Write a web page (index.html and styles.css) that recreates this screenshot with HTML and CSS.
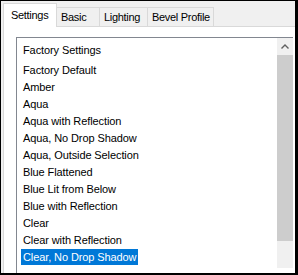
FILE: index.html
```html
<!DOCTYPE html>
<html>
<head>
    <meta charset="UTF-8">
    <title>Settings</title>
    <link rel="stylesheet" href="styles.css">
</head>
<body>
    <div class="frame">
        <div class="tabs">
            <div class="tab tab-settings active">Settings</div>
            <div class="tab tab-basic">Basic</div>
            <div class="tab tab-lighting">Lighting</div>
            <div class="tab tab-bevel">Bevel Profile</div>
        </div>
        <div class="panel">
            <div class="list">
                <div class="items">
                    <div class="group">Factory Settings</div>
                    <div class="item">Factory Default</div>
                    <div class="item">Amber</div>
                    <div class="item">Aqua</div>
                    <div class="item">Aqua with Reflection</div>
                    <div class="item">Aqua, No Drop Shadow</div>
                    <div class="item">Aqua, Outside Selection</div>
                    <div class="item">Blue Flattened</div>
                    <div class="item">Blue Lit from Below</div>
                    <div class="item">Blue with Reflection</div>
                    <div class="item">Clear</div>
                    <div class="item">Clear with Reflection</div>
                    <div class="item selected">Clear, No Drop Shadow</div>
                </div>
                <div class="scrollbar">
                    <div class="arrow">
                        <svg width="8" height="5" viewBox="0 0 8 5"><polyline points="0.5,4.5 4,1 7.5,4.5" fill="none" stroke="#606060" stroke-width="1.4"/></svg>
                    </div>
                    <div class="thumb"></div>
                    <div class="track"></div>
                </div>
            </div>
        </div>
    </div>
</body>
</html>
```

FILE: styles.css
```css
body{
    margin:0;
    background:#fff;
}
.frame{
    box-sizing:border-box;
    width:298px;
    height:275px;
    border-style:solid;
    border-color:#000;
    border-width:1px 3px 2px 1px;
    background:#f0f0f0;
    display:flex;
    flex-direction:column;
    overflow:hidden;
    font-family:"Liberation Sans", Arial, sans-serif;
    font-size:11px;
    color:#000;
}
.tabs{
    display:flex;
    align-items:flex-end;
    height:25px;
    padding-left:2px;
    flex-shrink:0;
}
.tab{
    position:relative;
    box-sizing:border-box;
    height:19px;
    line-height:18px;
    padding-left:4px;
    margin-right:-1px;
    border:1px solid #d9d9d9;
    border-bottom:none;
    letter-spacing:-0.3px;
    white-space:nowrap;
}
.tab.active{
    height:24px;
    margin-bottom:-1px;
    line-height:22px;
    padding-left:7px;
    background:#fff;
    z-index:1;
}
.tab-settings{ width:54px; }
.tab-basic{ width:44px; }
.tab-lighting{ width:49px; }
.tab-bevel{ width:67px; }
.panel{
    flex:1;
    margin-left:2px;
    border-top:1px solid #d9d9d9;
    border-left:1px solid #d9d9d9;
    background:#fff;
    padding:10px 0 0 12px;
}
.list{
    display:flex;
    width:276px;
    height:260px;
    border-top:1px solid #828790;
    border-left:1px solid #828790;
}
.items{
    flex:1;
    padding:4px 0 0 4px;
    letter-spacing:-0.1px;
}
.group{
    line-height:16px;
    padding-left:2px;
    margin-bottom:4px;
}
.item{
    width:fit-content;
    line-height:16px;
    padding:0 2px;
    margin-bottom:1px;
}
.item.selected{
    background:#0078d7;
    color:#fff;
}
.scrollbar{
    width:16px;
    display:flex;
    flex-direction:column;
}
.arrow{
    height:17px;
    background:#f0f0f0;
    display:flex;
    align-items:center;
    justify-content:center;
}
.thumb{
    height:186px;
    background:#cdcdcd;
}
.track{
    height:27px;
    background:#f0f0f0;
}
```
